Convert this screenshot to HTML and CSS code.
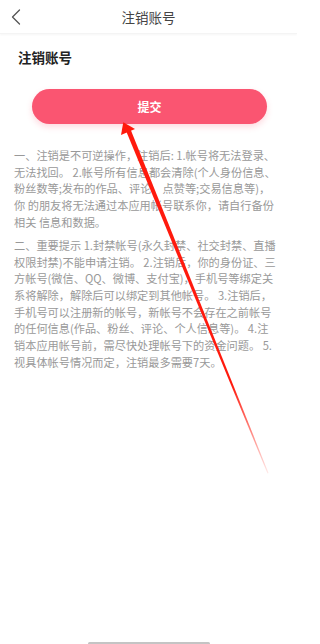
FILE: index.html
```html
<!DOCTYPE html>
<html lang="zh">
<head>
<meta charset="utf-8">
<title>注销账号</title>
<link rel="stylesheet" href="styles.css">
</head>
<body>
<div class="page">
  <header class="nav">
    <span class="back">
      <svg width="10" height="16" viewBox="0 0 10 16"><path d="M8.5 1 L1.5 8 L8.5 15" fill="none" stroke="#555" stroke-width="1.3" stroke-linecap="round" stroke-linejoin="round"/></svg>
    </span>
    <div class="nav-title">注销账号</div>
  </header>
  <h1 class="title">注销账号</h1>
  <div class="btn-row"><button class="submit">提交</button></div>
  <div class="notes">
    <p>一、注销是不可逆操作，注销后: 1.帐号将无法登录、<br>无法找回。 2.帐号所有信息都会清除(个人身份信息、<br>粉丝数等;发布的作品、评论、点赞等;交易信息等)，<br>你 的朋友将无法通过本应用帐号联系你，请自行备份<br>相关 信息和数据。</p>
    <p>二、重要提示 1.封禁帐号(永久封禁、社交封禁、直播<br>权限封禁)不能申请注销。 2.注销后，你的身份证、三<br>方帐号(微信、QQ、微博、支付宝)，手机号等绑定关<br>系将解除，解除后可以绑定到其他帐号。 3.注销后，<br>手机号可以注册新的帐号，新帐号不会存在之前帐号<br>的任何信息(作品、粉丝、评论、个人信息等)。 4.注<br>销本应用帐号前，需尽快处理帐号下的资金问题。 5.<br>视具体帐号情况而定，注销最多需要7天。</p>
  </div>
  <div class="home-bar"></div>
  <svg class="arrow" width="297" height="644" viewBox="0 0 297 644">
    <defs>
      <linearGradient id="fade" gradientUnits="userSpaceOnUse" x1="123" y1="122" x2="268" y2="473">
        <stop offset="0" stop-color="#ff1a0d" stop-opacity="1"/>
        <stop offset="0.75" stop-color="#ff1a0d" stop-opacity="1"/>
        <stop offset="1" stop-color="#ff1a0d" stop-opacity="0.1"/>
      </linearGradient>
    </defs>
    <polygon points="126.2,131.3 130.6,129.5 268.5,473 267.5,473.4" fill="url(#fade)"/>
    <polygon points="123.3,122.3 135,129 121,135" fill="#ff1a0d"/>
  </svg>
</div>
</body>
</html>
```
FILE: styles.css
```css
* { box-sizing: border-box; }
html, body { margin: 0; padding: 0; background: #fff; }
body {
  font-family: "Noto Sans CJK SC", "Noto Sans", sans-serif;
  width: 297px;
  height: 644px;
  overflow: hidden;
}
.page {
  position: relative;
  min-height: 644px;
  display: flex;
  flex-direction: column;
}
.nav {
  height: 34px;
  display: flex;
  align-items: center;
  justify-content: center;
  position: relative;
  box-shadow: 0 1px 2px rgba(0,0,0,0.04);
  border-bottom: 1px solid #f4f4f4;
}
.back {
  position: absolute;
  left: 11px;
  top: 9px;
  display: flex;
}
.nav-title {
  font-size: 13.5px;
  color: #444;
  line-height: 20px;
}
.title {
  margin: 13px 0 0 18px;
  font-size: 13.5px;
  line-height: 20px;
  font-weight: bold;
  color: #222;
}
.btn-row {
  padding: 22px 30px 0 32px;
}
.submit {
  width: 235px;
  height: 35px;
  border: none;
  border-radius: 18px;
  background: #fa5571;
  color: #fff;
  font-family: inherit;
  font-size: 12px;
  font-weight: bold;
  box-shadow: 0 3px 6px rgba(250, 85, 113, 0.22);
  padding: 0;
}
.notes {
  padding: 23px 0 0 14px;
  color: #999;
  font-size: 11.2px;
  line-height: 16.67px;
  white-space: nowrap;
}
.notes p { margin: 0 0 6.7px 0; }
.home-bar {
  margin-top: auto;
  align-self: center;
  width: 122px;
  height: 3px;
  border-radius: 2px;
  background: #c4c4c4;
  margin-bottom: -1px;
}
.arrow {
  position: absolute;
  left: 0;
  top: 0;
  pointer-events: none;
}
```
